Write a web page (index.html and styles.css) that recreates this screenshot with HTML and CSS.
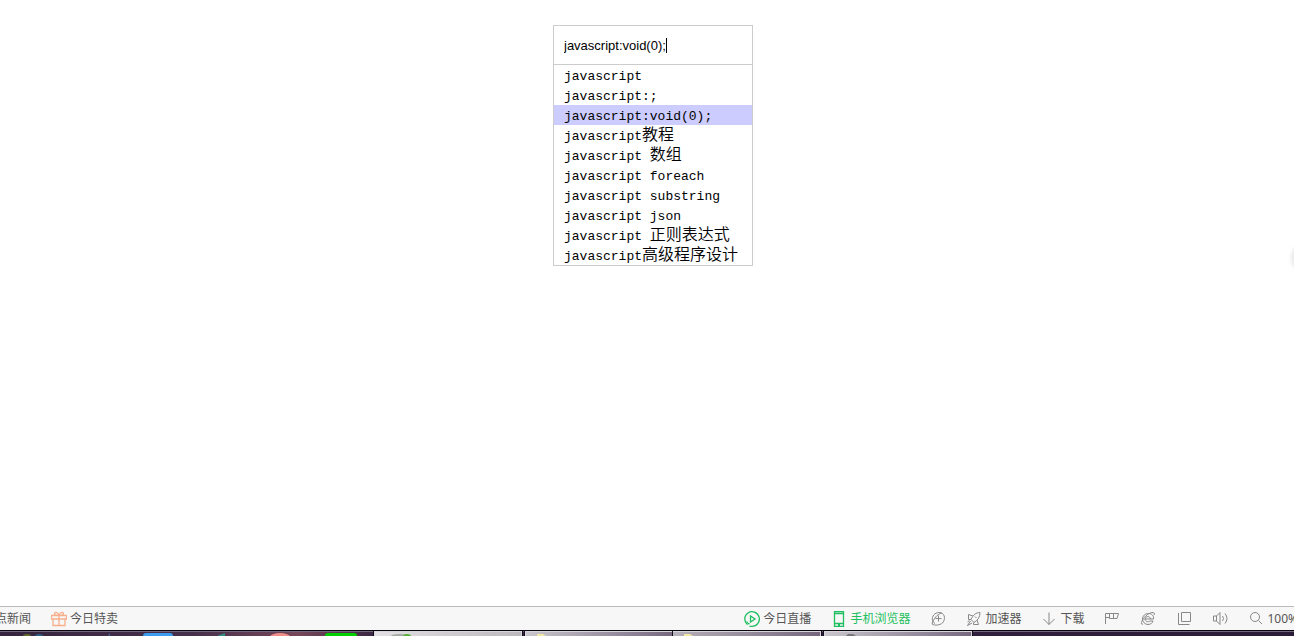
FILE: index.html
```html
<!DOCTYPE html>
<html lang="zh-CN">
<head>
<meta charset="utf-8">
<title>javascript</title>
<link rel="stylesheet" href="styles.css">
</head>
<body>
<main class="page">
  <form class="search">
    <div class="field">
      <input class="query" type="text" value="javascript:void(0);" aria-label="搜索" autocomplete="off">
      <span class="caret"></span>
    </div>
    <ul class="suggestions">
      <li>javascript</li>
      <li>javascript:;</li>
      <li class="active">javascript:void(0);</li>
      <li>javascript<span class="han">教程</span></li>
      <li>javascript <span class="han">数组</span></li>
      <li>javascript foreach</li>
      <li>javascript substring</li>
      <li>javascript json</li>
      <li>javascript <span class="han">正则表达式</span></li>
      <li>javascript<span class="han">高级程序设计</span></li>
    </ul>
  </form>
  <button class="edge-handle" type="button" aria-label="展开"></button>
</main>
<footer class="status">
  <div class="group news">
    <button class="tool" type="button">点新闻</button>
    <button class="tool" type="button">
      <svg class="icon gift" viewBox="0 0 16 16"><path d="M.5 4.500h15v3.500h-15zM2 8v6.500h12V8M8 4.500v10M8 4.500C7 1 3.500 .5 3.500 2.500 3.500 4 6 4.500 8 4.500M8 4.500C9 1 12.500 .5 12.500 2.500 12.500 4 10 4.500 8 4.500"/></svg>
      今日特卖
    </button>
  </div>
  <div class="group tools">
    <button class="tool" type="button">
      <svg class="icon green" viewBox="0 0 16 16"><path d="M3.500 13.700A7.300 7.300 0 1 1 8 15.300H5.500"/><path d="M6.500 5v6l4.500-3zM2.500 10.500q1 2 3 2.500"/></svg>
      今日直播
    </button>
    <button class="tool green" type="button">
      <svg class="icon green" viewBox="0 0 16 16"><path d="M3.500 .5h9v15h-9zM3.500 2.500h9M3.500 12.500h9M7 14h2"/></svg>
      手机浏览器
    </button>
    <button class="tool" type="button" aria-label="加速">
      <svg class="icon" viewBox="0 0 16 16"><path d="M2 13C5 15 10 14 12.500 12 15.500 8.500 15 3.500 11.500 2 8 .5 3.500 2.500 2.500 6.500 1.800 9 3 11.500 5 12.500M2 13C3.500 8 7 3 12 2M8.500 4.500v6M5.500 7.500h6"/></svg>
    </button>
    <button class="tool" type="button">
      <svg class="icon" viewBox="0 0 16 16"><path d="M14 1.500C10 1.500 7 4 5 8.500L8 11.500C12 9 14 6 14 1.500ZM7 5L2.500 3.500V8.500H5M11 9l1.500 4.500H7.500V11.500M4.500 10L1.500 14.500 6 12M3.500 9.500L1.500 11M9 5.500l1.500 1.500"/></svg>
      加速器
    </button>
    <button class="tool" type="button">
      <svg class="icon" viewBox="0 0 16 16"><path d="M8 1.500v12M2.500 8L8 13.500 13.500 8"/></svg>
      下载
    </button>
    <button class="tool" type="button" aria-label="标记">
      <svg class="icon" viewBox="0 0 16 16"><path d="M1.500 13V2.500h13L13 7.500H5.500v-5M1.500 6.500h4M9.500 2.500v5"/></svg>
    </button>
    <button class="tool" type="button" aria-label="浏览模式">
      <svg class="icon" viewBox="0 0 16 16"><path d="M4.500 8h9C14 4.500 11.500 2.500 8.500 2.500 5 2.500 2.500 5 2.500 8S5 13.500 8 13.500c2.500 0 4.500-1.500 5-3.500H10c-2 1.500-5 .5-5-2C5.500 5 10 4.500 10.500 8M3 13C-.5 14.500 2 7.500 7.500 3.500 12 .5 15.500 1 14 4"/></svg>
    </button>
    <button class="tool" type="button" aria-label="窗口">
      <svg class="icon" viewBox="0 0 16 16"><path d="M5.500 1.500h9v9h-9zM2.500 2v11.500h11"/></svg>
    </button>
    <button class="tool" type="button" aria-label="声音">
      <svg class="icon" viewBox="0 0 16 16"><path d="M4.500 5L8 1.500v12L4.500 10H1.500V5h3v5M10.500 5q2 2.500 0 5M13 2.500q4 5 0 10"/></svg>
    </button>
    <button class="tool" type="button">
      <svg class="icon" viewBox="0 0 16 16"><circle cx="7" cy="6" r="4.500"/><path d="M10.500 9.500l3.500 3.500"/></svg>
      100%
    </button>
  </div>
</footer>
<nav class="taskbar">
  <svg class="launchers" viewBox="0 0 371 4"><ellipse cx="27" cy="4" rx="4" ry="2" fill="#5f6b2c"/><ellipse cx="39" cy="4" rx="4" ry="2" fill="#2d5d83"/><path d="M108 4l2-3v3z" fill="#3a6699"/><rect x="143" y="1" width="30" height="8" rx="3" fill="#3c9cf0"/><path d="M217 4l8-3v3z" fill="#2c8f86"/><ellipse cx="280" cy="5" rx="10" ry="4" fill="#f28e88"/><rect x="325" y="1" width="32" height="8" rx="3" fill="#00d000"/></svg>
  <button class="task light" type="button" aria-label="窗口 1"><svg class="peek" viewBox="0 0 60 4"><ellipse cx="24" cy="4" rx="8" ry="2" fill="#a3aaa3"/><ellipse cx="32" cy="4" rx="4" ry="2" fill="#58b038"/></svg></button>
  <div class="stack">
    <button class="task" type="button" aria-label="窗口 2"><svg class="peek" viewBox="0 0 60 4"><path d="M11 4V2h6l3 2z" fill="#f3e8a5"/></svg></button>
    <button class="task mid" type="button" aria-label="窗口 3"><svg class="peek" viewBox="0 0 60 4"><path d="M11 4V2h6l3 2z" fill="#f3e8a5"/></svg></button>
  </div>
  <button class="task" type="button" aria-label="窗口 4"><svg class="peek" viewBox="0 0 60 4"><path d="M21 4l2-2h5l3 2z" fill="#777"/></svg></button>
</nav>
</body>
</html>
```
FILE: styles.css
```css
* { box-sizing: border-box; }
body {
  margin: 0;
  height: 100vh;
  display: flex;
  flex-direction: column;
  overflow: hidden;
  background: #fff;
  color: #000;
  font-family: "Noto Sans", "Noto Sans CJK SC", sans-serif;
  font-size: 12px;
}
button { border: 0; padding: 0; background: none; font: inherit; color: inherit; }
.page {
  position: relative;
  flex: 1;
  display: flex;
  justify-content: center;
  align-items: flex-start;
  padding: 25px 0 0 12px;
  overflow: hidden;
}
.search { width: 200px; }
.field { position: relative; }
.query {
  display: block;
  width: 100%;
  height: 40px;
  padding: 0 10px;
  border: 1px solid #ccc;
  border-radius: 0;
  outline: 0;
  background: #fff;
  color: #000;
  font: 13px "Liberation Sans", Arial, sans-serif;
}
.caret { position: absolute; left: 113px; top: 13px; width: 1px; height: 15px; background: #000; }
.suggestions {
  margin: 0;
  padding: 0;
  list-style: none;
  border: 1px solid #ccc;
  border-top: 0;
  font-family: "Liberation Mono", "Noto Sans CJK SC", monospace;
  font-size: 13px;
}
.suggestions li { height: 20px; line-height: 23px; padding-left: 10px; white-space: pre; }
.suggestions .active { background: #ccf; }
.han { font: 350 16px/1px "Noto Sans CJK SC", sans-serif; }
.edge-handle {
  position: absolute;
  right: -28px;
  top: 243px;
  width: 30px;
  height: 30px;
  border-radius: 50%;
  background: #eee;
  box-shadow: 0 0 4px #ddd;
}
.status {
  display: flex;
  justify-content: space-between;
  height: 24px;
  border-top: 1px solid #bbb;
  background: #f7f7f7;
  color: #555;
}
.group { display: flex; align-items: center; gap: 20px; }
.news { margin-left: -5px; }
.tools { margin-right: -4px; }
.tools { margin-right: -4px; }
.tool { display: flex; align-items: center; gap: 3px; line-height: 22px; white-space: nowrap; }
.green { color: #1dbf60; }
.icon { width: 16px; height: 16px; fill: none; stroke: #888; stroke-width: 1; }
.icon.green { stroke: #1dbf60; stroke-width: 1.3; }
.icon.gift { stroke: #f8b08c; stroke-width: 1.3; }
.taskbar {
  display: flex;
  gap: 3px;
  height: 6px;
  border-top: 1px solid #08050e;
  background: linear-gradient(90deg, #35243f, #47304b 15%, #76475a 23%, #392643 29%, #2b1c38);
  box-shadow: inset 0 1px #75677d;
  overflow: hidden;
}
.launchers { width: 371px; height: 4px; margin-top: 1px; flex: none; }
.task {
  width: 148px;
  height: 5px;
  text-align: left;
  line-height: 0;
  border: 1px solid #d8d5dc;
  border-bottom: 0;
  background: linear-gradient(90deg, #c9c6cd, #776880);
  box-shadow: 0 0 0 1px #160c20;
}
.task.light { background: linear-gradient(90deg, #e2e0e3, #bcb9be); }
.task.mid { background: linear-gradient(90deg, #b6b1ba, #76677d); border-left: 0; }
.stack { display: flex; }
.peek { width: 60px; height: 4px; }
```
